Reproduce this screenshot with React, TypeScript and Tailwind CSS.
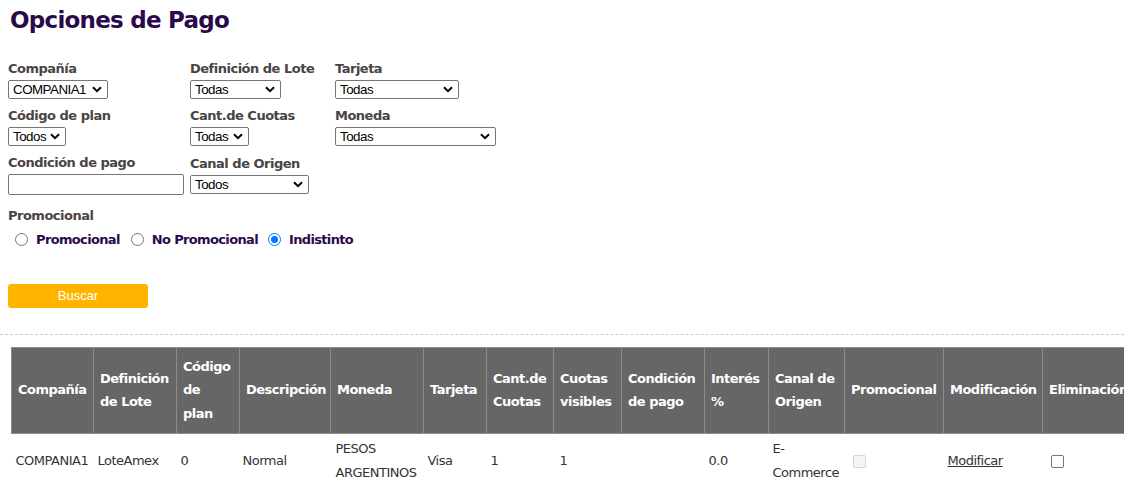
import React from "react";

const headers = [
  { label: "Compañía", w: "w-[82px]" },
  { label: "Definición de Lote", w: "w-[83px]" },
  { label: "Código de plan", w: "w-[63px]" },
  { label: "Descripción", w: "w-[91px]" },
  { label: "Moneda", w: "w-[93px]" },
  { label: "Tarjeta", w: "w-[63px]" },
  { label: "Cant.de Cuotas", w: "w-[67px]" },
  { label: "Cuotas visibles", w: "w-[68px]" },
  { label: "Condición de pago", w: "w-[83px]" },
  { label: "Interés %", w: "w-[64px]" },
  { label: "Canal de Origen", w: "w-[76px]" },
  { label: "Promocional", w: "w-[99px]" },
  { label: "Modificación", w: "w-[99px]" },
  { label: "Eliminación", w: "w-[100px]" },
];

function Select({ value, w }: { value: string; w: string }) {
  return (
    <div
      className={`${w} h-[19px] flex items-center justify-between border border-[#767676] rounded-[2px] bg-white pl-[4px] pr-[5px] text-[13.33px] leading-none text-black`}
      style={{ fontFamily: '"Liberation Sans", Arial, sans-serif' }}
    >
      <span>{value}</span>
      <svg width="10" height="7" viewBox="0 0 10 7" className="shrink-0">
        <path d="M1 1.2 L5 5.2 L9 1.2" fill="none" stroke="#000" strokeWidth="2" />
      </svg>
    </div>
  );
}

function Field({ label, children }: { label: string; children: React.ReactNode }) {
  return (
    <div className="flex flex-col gap-[3px]">
      <div className="text-[13px] font-bold text-[#4a4444] leading-[17px]">{label}</div>
      {children}
    </div>
  );
}

function Radio({ checked }: { checked?: boolean }) {
  return checked ? (
    <span className="w-[13px] h-[13px] rounded-full border-[1.5px] border-[#0075ff] flex items-center justify-center">
      <span className="w-[7px] h-[7px] rounded-full bg-[#0075ff]" />
    </span>
  ) : (
    <span className="w-[13px] h-[13px] rounded-full border border-[#767676] bg-white" />
  );
}

export default function App() {
  return (
    <div
      className="w-full h-[485px] overflow-hidden bg-white"
      style={{ fontFamily: '"DejaVu Sans", Verdana, sans-serif' }}
    >
      <div className="pl-[8px] pt-[6px]">
        <h1 className="text-[23px] font-bold text-[#2b0a4c] leading-[28px] pl-[2px] tracking-[-0.75px]">
          Opciones de Pago
        </h1>

        <div className="mt-[26px] grid grid-cols-[182px_145px_200px] gap-y-[8px] tracking-[-0.5px]">
          <Field label="Compañía">
            <Select value="COMPANIA1" w="w-[100px]" />
          </Field>
          <Field label="Definición de Lote">
            <Select value="Todas" w="w-[91px]" />
          </Field>
          <Field label="Tarjeta">
            <Select value="Todas" w="w-[124px]" />
          </Field>
          <Field label="Código de plan">
            <Select value="Todos" w="w-[58px]" />
          </Field>
          <Field label="Cant.de Cuotas">
            <Select value="Todas" w="w-[59px]" />
          </Field>
          <Field label="Moneda">
            <Select value="Todas" w="w-[161px]" />
          </Field>
          <Field label="Condición de pago">
            <div className="w-[176px] h-[21px] border border-[#767676] rounded-[2px] bg-white" />
          </Field>
          <div className="pt-[1px]">
            <Field label="Canal de Origen">
              <Select value="Todos" w="w-[119px]" />
            </Field>
          </div>
        </div>

        <div className="mt-[12px] text-[13px] font-bold text-[#4a4444] leading-[17px] tracking-[-0.5px]">
          Promocional
        </div>
        <div className="mt-[6px] flex items-center pl-[7px] text-[13px] font-bold text-[#2b0a4c] tracking-[-0.65px]">
          <Radio />
          <span className="ml-[8px] mr-[11px]">Promocional</span>
          <Radio />
          <span className="ml-[8px] mr-[10px]">No Promocional</span>
          <Radio checked />
          <span className="ml-[8px]">Indistinto</span>
        </div>

        <button
          className="mt-[34px] w-[140px] h-[24px] bg-[#ffb400] rounded-[3px] text-white text-[13px] leading-none"
          style={{ fontFamily: '"Liberation Sans", Arial, sans-serif' }}
        >
          Buscar
        </button>
      </div>

      <div className="mt-[26px] border-t border-dashed border-[#cccccc]" />

      <div className="pl-[11px] pt-[12px]">
        <table className="border-collapse table-fixed w-[1131px] text-[13px] tracking-[-0.5px]">
          <thead>
            <tr className="bg-[#666666] h-[86px]">
              {headers.map((h) => (
                <th
                  key={h.label}
                  className={`${h.w} border border-[#8c8c8c] px-[6px] text-left font-bold text-white leading-[23.5px] align-middle`}
                >
                  {h.label}
                </th>
              ))}
            </tr>
          </thead>
          <tbody className="text-[#333333]">
            <tr className="h-[56px]">
              <td className="px-[4px] leading-[24px]">COMPANIA1</td>
              <td className="px-[4px] leading-[24px]">LoteAmex</td>
              <td className="px-[4px] leading-[24px]">0</td>
              <td className="px-[3px] leading-[24px]">Normal</td>
              <td className="px-[5px] leading-[24px]">PESOS ARGENTINOS</td>
              <td className="px-[4px] leading-[24px]">Visa</td>
              <td className="px-[4px] leading-[24px]">1</td>
              <td className="px-[6px] leading-[24px]">1</td>
              <td className="px-[6px] leading-[24px]"></td>
              <td className="px-[4px] leading-[24px]">0.0</td>
              <td className="px-[4px] leading-[24px]">E-Commerce</td>
              <td className="px-[8px] leading-[24px]">
                <span className="block w-[13px] h-[13px] rounded-[2px] border border-[#d6d6d6] bg-[#f4f4f4]" />
              </td>
              <td className="px-[4px] leading-[24px]">
                <span className="underline">Modificar</span>
              </td>
              <td className="px-[8px] leading-[24px]">
                <span className="block w-[13px] h-[13px] rounded-[2px] border border-[#767676] bg-white" />
              </td>
            </tr>
          </tbody>
        </table>
      </div>
    </div>
  );
}
